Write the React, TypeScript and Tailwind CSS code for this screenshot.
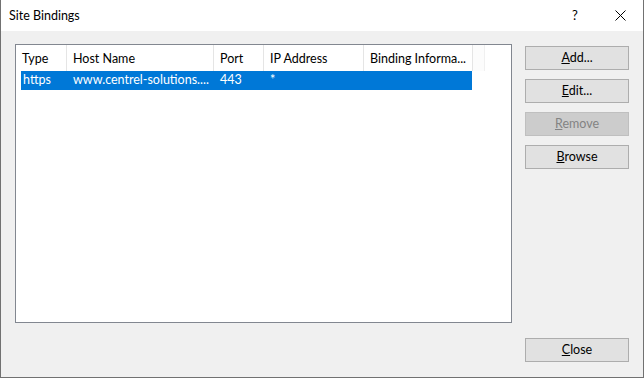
import React from "react";

const font = { fontFamily: 'Lato, "Noto Sans", sans-serif' };

function Btn({ children, disabled }: { children: React.ReactNode; disabled?: boolean }) {
  return (
    <div
      className={
        "w-[104px] h-[24px] flex items-center justify-center border text-[12.5px] " +
        (disabled
          ? "bg-[#cccccc] border-[#bfbfbf] text-[#838383]"
          : "bg-[#e1e1e1] border-[#adadad] text-black")
      }
    >
      {children}
    </div>
  );
}

export default function App() {
  return (
    <div
      className="w-[644px] h-[378px] flex flex-col border-x border-b border-[#717171] bg-white text-black"
      style={font}
    >
      <div className="h-[31px] bg-white flex items-center shrink-0">
        <div className="pl-[8px] text-[12.5px] leading-none pt-[1px]">Site Bindings</div>
        <div className="ml-auto flex items-center">
          <div className="text-[13px] leading-none w-[10px] mr-[33px]">?</div>
          <svg width="11" height="11" viewBox="0 0 11 11" className="mr-[17px]">
            <path d="M0.5 0.5 L10.5 10.5 M10.5 0.5 L0.5 10.5" stroke="#000" strokeWidth="1" />
          </svg>
        </div>
      </div>
      <div className="flex-1 bg-[#f0f0f0] flex pl-[14px] pt-[13px]">
        <div className="w-[497px] h-[279px] border border-[#828790] bg-white flex flex-col">
          <div className="h-[26px] flex text-[12.5px] shrink-0">
            <div className="w-[51px] border-r border-[#e5e5e5] pl-[6px] pt-[2px] flex items-center">Type</div>
            <div className="w-[147px] border-r border-[#e5e5e5] pl-[6px] pt-[2px] flex items-center">Host Name</div>
            <div className="w-[50px] border-r border-[#e5e5e5] pl-[6px] pt-[2px] flex items-center">Port</div>
            <div className="w-[100px] border-r border-[#e5e5e5] pl-[6px] pt-[2px] flex items-center">IP Address</div>
            <div className="w-[109px] border-r border-[#e5e5e5] pl-[6px] pt-[2px] flex items-center whitespace-nowrap">Binding Informa...</div>
            <div className="w-[12px] bg-[#fcfcfc] border-r border-[#f0f0f0]"></div>
          </div>
          <div className="ml-[5px] w-[451px] h-[19px] bg-[#0078d7] text-white flex items-center text-[12.5px]">
            <div className="w-[46px] pl-[2px]">https</div>
            <div className="w-[147px] pl-[6px] whitespace-nowrap">www.centrel-solutions....</div>
            <div className="w-[50px] pl-[6px]">443</div>
            <div className="w-[100px] pl-[6px]">*</div>
          </div>
        </div>
        <div className="ml-[13px] pt-[2px] pb-[15px] flex flex-col">
          <div className="flex flex-col gap-[9px]">
            <Btn><span><u>A</u>dd...</span></Btn>
            <Btn><span><u>E</u>dit...</span></Btn>
            <Btn disabled><span><u>R</u>emove</span></Btn>
            <Btn><span><u>B</u>rowse</span></Btn>
          </div>
          <div className="mt-auto">
            <Btn><span><u>C</u>lose</span></Btn>
          </div>
        </div>
      </div>
    </div>
  );
}
